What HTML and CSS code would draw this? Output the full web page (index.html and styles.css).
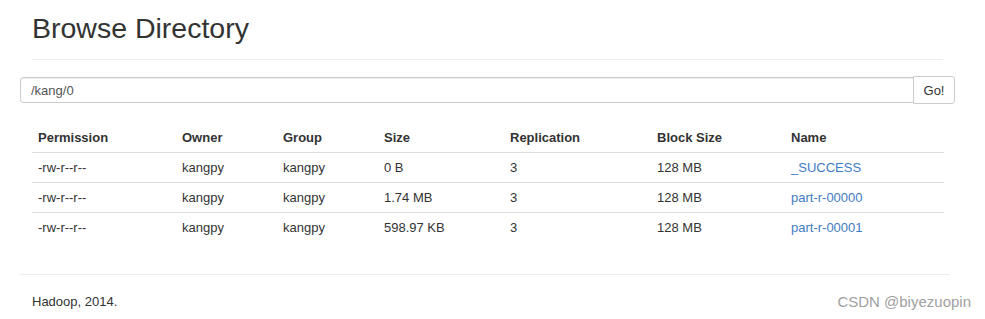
FILE: index.html
```html
<!DOCTYPE html>
<html lang="en">
<head>
  <meta charset="UTF-8" />
  <title>Browsing HDFS</title>
  <link rel="stylesheet" href="styles.css">
</head>
<body>
  <div class="page">
    <div class="page-header">
      <h1>Browse Directory</h1>
    </div>

    <!-- path box -->
    <div class="path-row">
      <input type="text" class="path-input" value="/kang/0" />
      <button class="go-btn">Go!</button>
    </div>

    <table class="listing">
      <colgroup>
        <col style="width:144px">
        <col style="width:101px">
        <col style="width:101px">
        <col style="width:126px">
        <col style="width:147px">
        <col style="width:134px">
        <col>
      </colgroup>
      <thead>
        <tr>
          <th>Permission</th>
          <th>Owner</th>
          <th>Group</th>
          <th>Size</th>
          <th>Replication</th>
          <th>Block Size</th>
          <th>Name</th>
        </tr>
      </thead>
      <tbody>
        <tr>
          <td>-rw-r--r--</td>
          <td>kangpy</td>
          <td>kangpy</td>
          <td>0 B</td>
          <td>3</td>
          <td>128 MB</td>
          <td><a href="#">_SUCCESS</a></td>
        </tr>
        <tr>
          <td>-rw-r--r--</td>
          <td>kangpy</td>
          <td>kangpy</td>
          <td>1.74 MB</td>
          <td>3</td>
          <td>128 MB</td>
          <td><a href="#">part-r-00000</a></td>
        </tr>
        <tr>
          <td>-rw-r--r--</td>
          <td>kangpy</td>
          <td>kangpy</td>
          <td>598.97 KB</td>
          <td>3</td>
          <td>128 MB</td>
          <td><a href="#">part-r-00001</a></td>
        </tr>
      </tbody>
    </table>

    <hr class="footer-rule" />
    <p class="footer">Hadoop, 2014.</p>
  </div>
  <div class="watermark">CSDN @biyezuopin</div>
</body>
</html>
```

FILE: styles.css
```css
body {
  margin: 0;
  font-family: "Liberation Sans", Arial, sans-serif;
  font-size: 13px;
  color: #333;
  background: #fff;
}
.page {
  padding: 0 30px 0 20px;
}
.page-header {
  margin: 0 12px;
  padding: 12px 0 14px;
  border-bottom: 1px solid #eee;
}
.page-header h1 {
  margin: 0;
  font-size: 28.5px;
  font-weight: normal;
  line-height: 33px;
  color: #333;
}
.path-row {
  display: flex;
  margin-top: 16px;
}
.path-input {
  flex: 1;
  height: 26px;
  box-sizing: border-box;
  margin-top: 1px;
  padding: 0 10px;
  font-family: inherit;
  font-size: 13px;
  color: #555;
  border: 1px solid #ccc;
  border-radius: 3px 0 0 3px;
  box-shadow: inset 0 1px 1px rgba(0, 0, 0, 0.075);
}
.go-btn {
  width: 42px;
  height: 28px;
  margin-left: -1px;
  padding: 0;
  font-family: inherit;
  font-size: 13px;
  color: #333;
  background: #fff;
  border: 1px solid #ccc;
  border-radius: 0 3px 3px 0;
}
.listing {
  width: 912px;
  margin: 18px 0 0 12px;
  border-collapse: collapse;
  table-layout: fixed;
}
.listing th {
  text-align: left;
  font-weight: bold;
  padding: 8px 6px 6px;
  line-height: 16px;
  border-bottom: 1px solid #ddd;
}
.listing td {
  padding: 7px 6px 6px;
  line-height: 16px;
  border-top: 1px solid #ddd;
}
.listing tbody tr:first-child td {
  border-top: none;
}
.listing a {
  color: #3f7cc4;
  text-decoration: none;
}
.footer-rule {
  margin: 32px 5px 0 0;
  border: 0;
  border-top: 1px solid #eee;
}
.footer {
  margin: 19px 0 0 12px;
  font-size: 13px;
}
.watermark {
  position: absolute;
  right: 14px;
  top: 293px;
  font-size: 15px;
  color: #a0a0a0;
}
```
